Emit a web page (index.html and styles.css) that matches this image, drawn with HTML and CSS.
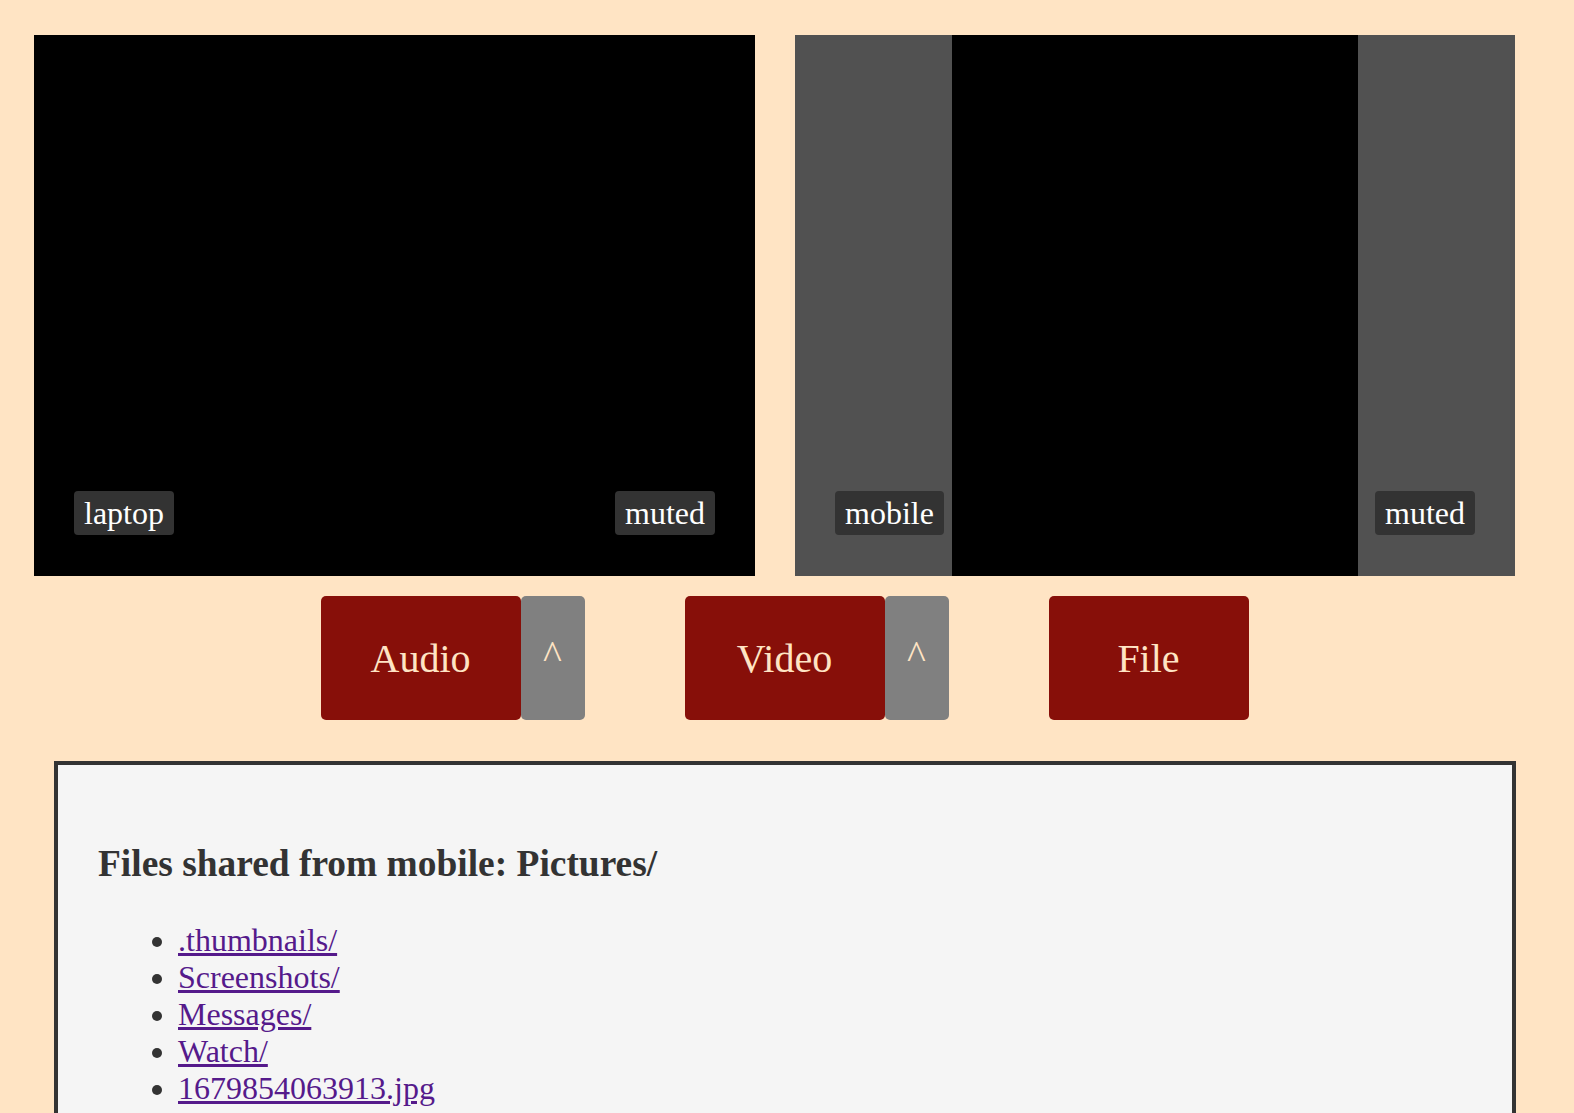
FILE: index.html
```html
<!DOCTYPE html>
<html lang="en">
<head>
<meta charset="utf-8">
<title>Call</title>
<link rel="stylesheet" href="styles.css">
</head>
<body>
<div class="videos">
  <div class="video">
    <div class="screen landscape"></div>
    <span class="tag tag-name">laptop</span>
    <span class="tag tag-state">muted</span>
  </div>
  <div class="video gray">
    <div class="screen portrait"></div>
    <span class="tag tag-name">mobile</span>
    <span class="tag tag-state">muted</span>
  </div>
</div>
<div class="controls">
  <div class="group">
    <button class="btn main">Audio</button><button class="btn caret">^</button>
  </div>
  <div class="group">
    <button class="btn main">Video</button><button class="btn caret">^</button>
  </div>
  <div class="group">
    <button class="btn main">File</button>
  </div>
</div>
<div class="files">
  <h3>Files shared from mobile: Pictures/</h3>
  <ul>
    <li><a href="#">.thumbnails/</a></li>
    <li><a href="#">Screenshots/</a></li>
    <li><a href="#">Messages/</a></li>
    <li><a href="#">Watch/</a></li>
    <li><a href="#">1679854063913.jpg</a></li>
  </ul>
</div>
</body>
</html>
```
FILE: styles.css
```css
html, body {
  margin: 0;
  padding: 0;
  overflow: hidden;
}
body {
  background: #ffe4c4;
  font-family: "Liberation Serif", "Times New Roman", serif;
  font-size: 32px;
  color: #333;
}
.videos {
  display: flex;
  gap: 40px;
  padding: 35px 0 0 34px;
}
.video {
  position: relative;
  height: 541px;
  width: 720px;
  background: #000;
  display: flex;
  justify-content: center;
}
.video:first-child {
  width: 721px;
}
.video.gray {
  background: #515151;
}
.screen {
  height: 100%;
  background: #000;
}
.screen.landscape {
  width: 100%;
}
.screen.portrait {
  width: 406px;
}
.tag {
  position: absolute;
  bottom: 41px;
  background: #333;
  color: #fff;
  border-radius: 4px;
  padding: 4px 10px;
  line-height: 36px;
  font-size: 32px;
}
.tag-name {
  left: 40px;
}
.tag-state {
  right: 40px;
}
.controls {
  display: flex;
  justify-content: center;
  gap: 100px;
  margin-top: 20px;
  padding-right: 5px;
}
.group {
  display: flex;
}
.btn {
  border: none;
  margin: 0;
  height: 124px;
  border-radius: 5px;
  font-family: "Liberation Serif", "Times New Roman", serif;
  font-size: 40px;
  color: #ffe4c4;
  padding: 0;
}
.btn.main {
  width: 200px;
  background: #870f09;
}
.btn.caret {
  width: 64px;
  background: #808080;
  padding-bottom: 6px;
}
.files {
  margin: 41px 0 0 54px;
  width: 1462px;
  box-sizing: border-box;
  border: 4px solid #333;
  background: #f5f5f5;
  padding: 40px;
  min-height: 600px;
}
.files h3 {
  font-size: 1.17em;
  margin: 37px 0;
}
.files ul {
  margin: 32px 0;
  padding-left: 80px;
}
.files a {
  color: #551a8b;
}
```
